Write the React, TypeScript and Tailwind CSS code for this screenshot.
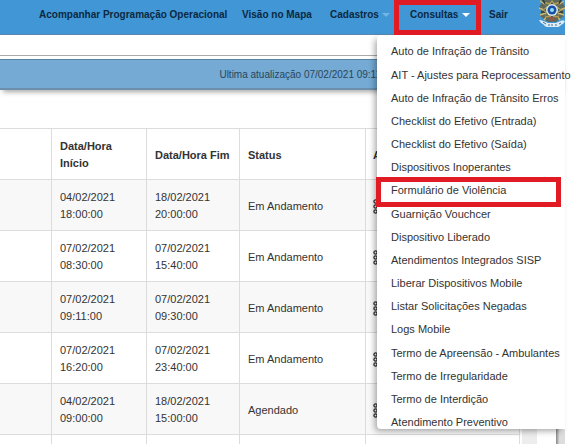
import React from "react";

const menuItems = [
  "Auto de Infração de Trânsito",
  "AIT - Ajustes para Reprocessamento",
  "Auto de Infração de Trânsito Erros",
  "Checklist do Efetivo (Entrada)",
  "Checklist do Efetivo (Saída)",
  "Dispositivos Inoperantes",
  "Formulário de Violência",
  "Guarnição Vouchcer",
  "Dispositivo Liberado",
  "Atendimentos Integrados SISP",
  "Liberar Dispositivos Mobile",
  "Listar Solicitações Negadas",
  "Logs Mobile",
  "Termo de Apreensão - Ambulantes",
  "Termo de Irregularidade",
  "Termo de Interdição",
  "Atendimento Preventivo",
];

const rows = [
  ["04/02/2021", "18:00:00", "18/02/2021", "20:00:00", "Em Andamento"],
  ["07/02/2021", "08:30:00", "07/02/2021", "15:40:00", "Em Andamento"],
  ["07/02/2021", "09:11:00", "07/02/2021", "09:30:00", "Em Andamento"],
  ["07/02/2021", "16:20:00", "07/02/2021", "23:40:00", "Em Andamento"],
  ["04/02/2021", "09:00:00", "18/02/2021", "15:00:00", "Agendado"],
  ["", "", "", "", ""],
];

function Caret({ className }: { className: string }) {
  return (
    <svg viewBox="0 0 8 4" className={"h-1 w-2 " + className} fill="currentColor" aria-hidden="true">
      <path d="M0 0h8L4 4z" />
    </svg>
  );
}

function Crest() {
  return (
    <svg viewBox="0 0 26 28" className="h-7 w-[26px]" aria-hidden="true">
      <path d="M3 0h20l1 4 2 3-2 4 1 5-4 3-4 3H9l-4-3-4-3 1-5-2-4 2-3z" fill="#5d6a5c" />
      <path d="m1 1 6 4M25 1l-6 4M0 8l5 2M26 8l-5 2M1 15l6-2M25 15l-6-2M5 20l4-5M21 20l-4-5" stroke="#cdb877" strokeWidth="1.500" />
      <path d="M4 0l3 5M22 0l-3 5M2 12h5M24 12h-5M7 18l3-3M19 18l-3-3" stroke="#2b3b3a" strokeWidth="1.500" />
      <path d="m13 0 2.500 3L20 2l-1 5 4 3-4 3 1 5-5-1-2 3-2-3-5 1 1-5-4-3 4-3-1-5 4.500 1z" fill="#b39b55" />
      <path d="m13 2 2 3 4-1-1 4 3 2-3 2 1 4-4-1-2 3-2-3-4 1 1-4-3-2 3-2-1-4 4 1z" fill="#3f5f55" />
      <circle cx="13" cy="10" r="6" fill="#dce8f2" />
      <circle cx="13" cy="10" r="4.500" fill="#1d4fa0" />
      <circle cx="13" cy="10" r="2" fill="#8fdcff" />
      <path d="M10 17h6l-1 4h-4z" fill="#8d5a4c" />
      <path d="M0 20c3 0 4 1 7 2l2 1h8l2-1c3-1 4-2 7-1l-2 3c-2 0-3 3-5 3H8c-2 0-3-3-6-4z" fill="#dcedf7" />
      <path d="m4 22 3 2M9 25h2M13 24v2M16 25h2M20 24l2-1" stroke="#4d6a84" />
    </svg>
  );
}

function Dots() {
  return (
    <svg viewBox="0 0 6 15" className="h-[15px] w-[6px]" fill="none" stroke="#303030" strokeWidth="1.300" aria-hidden="true">
      <circle cx="2.500" cy="2.500" r="1.600" />
      <circle cx="2.500" cy="7.500" r="1.600" />
      <circle cx="2.500" cy="12.500" r="1.600" />
    </svg>
  );
}

const cell = "border border-[#dcdcdc] px-2 pt-[2px] text-left align-middle";
const actionCell = "border border-[#dcdcdc] px-[7px] pt-[2px] text-left align-middle";

export default function App() {
  return (
    <div className="h-screen overflow-hidden bg-white pr-[19px] font-['Liberation_Sans',Arial,sans-serif] text-[11px] text-[#333]">
      <div className="relative">
        <header className="flex h-[35px] border-b border-[#5d87ad] bg-[#4197d5] pl-[39px] text-[10px] font-bold text-[#0b2942]">
          <nav className="flex h-[29px] flex-1 items-center whitespace-nowrap">
            <a href="#programacao" className="w-[203px]">Acompanhar Programação Operacional</a>
            <a href="#mapa" className="w-[88px]">Visão no Mapa</a>
            <button type="button" className="flex w-[60px] items-center justify-between">
              Cadastros <Caret className="text-[#72b6e5]" />
            </button>
            <div className="relative z-10 ml-1 h-[35px] w-[87px] self-start border-5 border-[#e11b24]">
              <button type="button" aria-expanded="true" className="flex h-[19px] w-full items-center justify-between pr-[6px] pl-[11px]">
                Consultas <Caret className="text-white" />
              </button>
            </div>
            <a href="#sair" className="pl-2">Sair</a>
          </nav>
          <Crest />
        </header>

        <div className="mb-[3px] h-[21px] border-b border-[#aaa]" />
        <div className="flex h-[31px] items-center justify-end border-t border-b-2 border-t-[#5783a5] border-b-[#6b8fad] bg-[#74aad3] pr-[184px] text-[10px] text-[#29465c] shadow-[0_5px_5px_-3px_rgba(0,0,0,0.35)]">
          <p className="whitespace-nowrap">Ultima atualização 07/02/2021 09:11</p>
        </div>

        <div className="flex pt-[38px]">
          <table className="-ml-1 w-[524px] shrink-0 table-fixed border-collapse leading-[17px]">
            <colgroup>
              <col className="w-[55px]" />
              <col className="w-[95px]" />
              <col className="w-[93px]" />
              <col className="w-[126px]" />
              <col />
            </colgroup>
            <thead>
              <tr className="h-[51px]">
                <th className={cell} />
                <th className={cell}>Data/Hora<br />Início</th>
                <th className={cell}>Data/Hora Fim</th>
                <th className={cell}>Status</th>
                <th className={actionCell}>Ações</th>
              </tr>
            </thead>
            <tbody>
              {rows.map((r, i) => (
                <tr key={i} className="h-[51px] odd:bg-[#f8f8f8] last:bg-white">
                  <td className={cell} />
                  <td className={cell}>{r[0]}<br />{r[1]}</td>
                  <td className={cell}>{r[2]}<br />{r[3]}</td>
                  <td className={cell}>{r[4]}</td>
                  <td className={actionCell}><Dots /></td>
                </tr>
              ))}
            </tbody>
          </table>
          <div className="ml-[2px] w-[15px] bg-[#ededed]" />
          <div className="ml-auto w-[9px] bg-linear-to-r from-[#888] to-[#ddd] to-40%" />
        </div>

        <div className="absolute top-[35px] right-0 h-[394px] w-[188px] rounded-l-[4px] bg-white pt-[5px] shadow-[-3px_3px_6px_-1px_rgba(0,0,0,0.35)]">
          <ul className="flex h-[394px] flex-col whitespace-nowrap">
            {menuItems.map((m) => (
              <li key={m} className="flex flex-1 items-center pl-[14px]">
                <a href="#consulta">{m}</a>
              </li>
            ))}
          </ul>
        </div>
        <div className="pointer-events-none absolute top-[177px] right-[4px] h-[30px] w-[185px] border-5 border-[#e11b24]" />
      </div>
    </div>
  );
}
